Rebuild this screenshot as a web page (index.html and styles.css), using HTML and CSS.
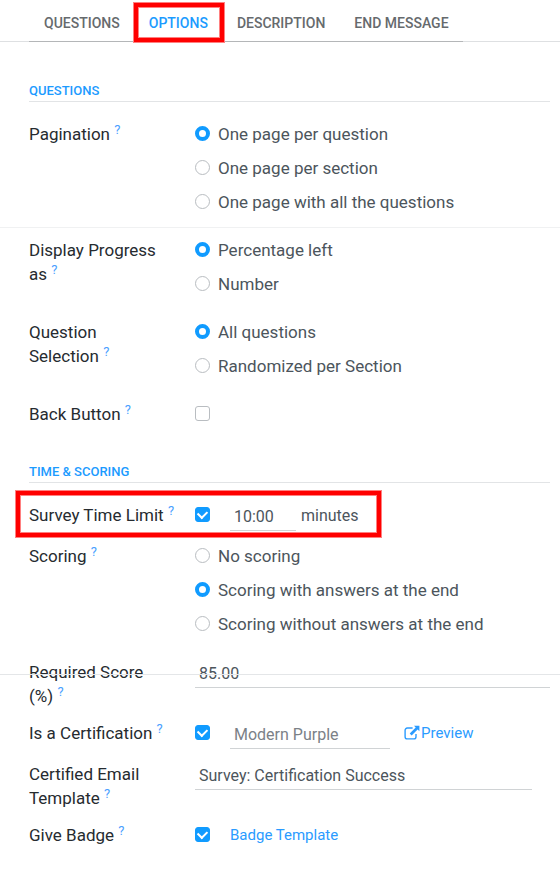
FILE: index.html
```html
<!DOCTYPE html>
<html lang="en">
<head>
<meta charset="utf-8">
<meta name="viewport" content="width=device-width, initial-scale=1">
<title>Survey options</title>
<link rel="stylesheet" href="styles.css">
</head>
<body>
<nav class="tabs">
  <div class="tabs-list">
    <a class="tab" href="#questions">QUESTIONS</a>
    <a class="tab tab-active marked" href="#options" aria-current="page">OPTIONS</a>
    <a class="tab" href="#description">DESCRIPTION</a>
    <a class="tab" href="#end">END MESSAGE</a>
  </div>
</nav>
<main>
  <form class="form">
    <section class="group">
      <h2 class="heading">QUESTIONS</h2>
      <div class="row row-choices row-ruled" role="radiogroup" aria-labelledby="l-pagination">
        <span class="label" id="l-pagination">Pagination&nbsp;<sup>?</sup></span>
        <div class="choices">
          <label class="choice"><input type="radio" name="pagination" checked>One page per question</label>
          <label class="choice"><input type="radio" name="pagination">One page per section</label>
          <label class="choice"><input type="radio" name="pagination">One page with all the questions</label>
        </div>
      </div>
      <div class="row row-choices" role="radiogroup" aria-labelledby="l-progress">
        <span class="label" id="l-progress">Display Progress as&nbsp;<sup>?</sup></span>
        <div class="choices">
          <label class="choice"><input type="radio" name="progress" checked>Percentage left</label>
          <label class="choice"><input type="radio" name="progress">Number</label>
        </div>
      </div>
      <div class="row row-choices" role="radiogroup" aria-labelledby="l-selection">
        <span class="label" id="l-selection">Question Selection&nbsp;<sup>?</sup></span>
        <div class="choices">
          <label class="choice"><input type="radio" name="selection" checked>All questions</label>
          <label class="choice"><input type="radio" name="selection">Randomized per Section</label>
        </div>
      </div>
      <div class="row">
        <label class="label" for="back">Back Button&nbsp;<sup>?</sup></label>
        <div class="field"><input type="checkbox" id="back"></div>
      </div>
    </section>

    <section class="group">
      <h2 class="heading">TIME &amp; SCORING</h2>
      <div class="row">
        <label class="label" for="limited">Survey Time Limit&nbsp;<sup>?</sup></label>
        <div class="field">
          <input type="checkbox" id="limited" checked>
          <input class="text text-short" type="text" id="minutes" value="10:00">
          <label class="unit" for="minutes">minutes</label>
        </div>
        <span class="row-mark marked"></span>
      </div>
      <div class="row row-choices" role="radiogroup" aria-labelledby="l-scoring">
        <span class="label" id="l-scoring">Scoring&nbsp;<sup>?</sup></span>
        <div class="choices">
          <label class="choice"><input type="radio" name="scoring">No scoring</label>
          <label class="choice"><input type="radio" name="scoring" checked>Scoring with answers at the end</label>
          <label class="choice"><input type="radio" name="scoring">Scoring without answers at the end</label>
        </div>
      </div>
      <div class="row row-crossed">
        <label class="label" for="score">Required Score (%)&nbsp;<sup>?</sup></label>
        <div class="field"><input class="text" type="text" id="score" value="85.00"></div>
      </div>
      <div class="row">
        <label class="label" for="certification">Is a Certification&nbsp;<sup>?</sup></label>
        <div class="field">
          <input type="checkbox" id="certification" checked>
          <select class="text text-theme" aria-label="Certification theme"><option>Modern Purple</option></select>
          <a class="link preview" href="#preview"><svg class="icon" viewBox="0 0 16 16" aria-hidden="true"><path class="icon-frame" d="M8.6 3H3.3A2.2 2.2 0 0 0 1.1 5.2v6.5a2.2 2.2 0 0 0 2.2 2.2h6.5a2.2 2.2 0 0 0 2.2-2.2V9"/><path class="icon-arrow" d="M10 .8h5.4v5.4l-1.8-1.8-6 6-1.9-1.9 6-6z"/></svg>Preview</a>
        </div>
      </div>
      <div class="row">
        <label class="label" for="template">Certified Email Template&nbsp;<sup>?</sup></label>
        <div class="field field-inset"><input class="text" type="text" id="template" value="Survey: Certification Success"></div>
      </div>
      <div class="row">
        <label class="label" for="badge">Give Badge&nbsp;<sup>?</sup></label>
        <div class="field">
          <input type="checkbox" id="badge" checked>
          <a class="link" href="#badge-template">Badge Template</a>
        </div>
      </div>
    </section>
  </form>
</main>
</body>
</html>
```
FILE: styles.css
```css
* { box-sizing: border-box; }

body {
  margin: 0;
  background: #fff;
  color: #4c555c;
  font: 17px/24px Roboto, "Liberation Sans", sans-serif;
}

.tabs {
  padding: 5px 29px 0;
  border-bottom: 1px solid #dee0e2;
}

.tabs-list {
  display: inline-flex;
  vertical-align: top;
  margin-bottom: -1px;
  border-bottom: 1px solid #b4b6b8;
}

.tab {
  position: relative;
  padding: 6px 14px 6px 15px;
  color: #666a6d;
  font-size: 14px;
  font-weight: 500;
  text-decoration: none;
}

.tab-active { color: #1c9bff; }

.marked::after {
  content: "";
  position: absolute;
  inset: 0;
  border: 4px solid #f00;
  box-shadow: 0 0 0 1px #ff8080, inset 0 0 0 1px #ff8080;
  pointer-events: none;
}

.tab-active::after { inset: -2px -2px -1px 0; }

.form { padding: 38px 10px 24px 29px; }

.group + .group { margin-top: 35px; }

.heading {
  margin: 0 0 20px;
  border-bottom: 1px solid #e2e4e6;
  color: #1c9bff;
  font-size: 13px;
  font-weight: 500;
  line-height: 21px;
}

.row {
  position: relative;
  display: grid;
  grid-template-columns: 148px 1fr;
  column-gap: 18px;
  margin-bottom: 13px;
}

.row-choices { margin-bottom: 24px; }

.label { color: #262b30; }

.label sup {
  color: #4a9fff;
  font-size: 13px;
  line-height: 1;
  vertical-align: 6px;
}

.row-ruled::after,
.row-crossed::after {
  content: "";
  position: absolute;
  left: -29px;
  right: -10px;
  bottom: -14px;
  border-top: 1px solid #f0f1f2;
}

.row-crossed::after {
  top: 14px;
  bottom: auto;
  border-color: #e4e6e8;
}

.choices { display: grid; gap: 10px; }

.choice { display: flex; gap: 8px; }

input[type="radio"],
input[type="checkbox"] {
  flex: none;
  appearance: none;
  width: 15px;
  height: 15px;
  margin: 4px 0 0;
  border: 1px solid #b9bdc1;
  border-radius: 50%;
  background: #fff;
}

input[type="radio"]:checked { border: 4px solid #109bff; }

input[type="checkbox"] { border-radius: 3px; }

input[type="checkbox"]:checked {
  display: grid;
  place-items: center;
  border-color: #109bff;
  background: #109bff;
}

input[type="checkbox"]:checked::before {
  content: "";
  width: 7px;
  height: 5px;
  margin-bottom: 2px;
  border: solid #fff;
  border-width: 0 0 2px 2px;
  transform: rotate(-45deg);
}

.field {
  display: flex;
  align-items: flex-start;
}

.field-inset { padding-right: 18px; }

.text {
  appearance: none;
  width: 100%;
  height: 28px;
  padding: 0 4px;
  border: 0;
  border-bottom: 1px solid #d0d3d5;
  border-radius: 0;
  background: transparent;
  color: #4c555c;
  font: inherit;
  font-size: 16px;
}

.text-short { width: 66px; margin-left: 20px; }

.text-theme {
  width: 160px;
  margin-left: 20px;
  color: #7b8187;
}

.unit { margin: 1px 0 0 5px; font-size: 16px; }

.link {
  margin-left: 20px;
  color: #2a9bff;
  font-size: 15px;
  text-decoration: none;
}

.preview {
  display: flex;
  align-items: center;
  gap: 1px;
  margin-left: 14px;
}

.icon { width: 16px; height: 16px; }
.icon-frame { fill: none; stroke: #2a9bff; stroke-width: 1.4; }
.icon-arrow { fill: #2a9bff; }

.row-mark {
  position: absolute;
  top: -12px;
  left: -13px;
  width: 365px;
  height: 46px;
}
```
